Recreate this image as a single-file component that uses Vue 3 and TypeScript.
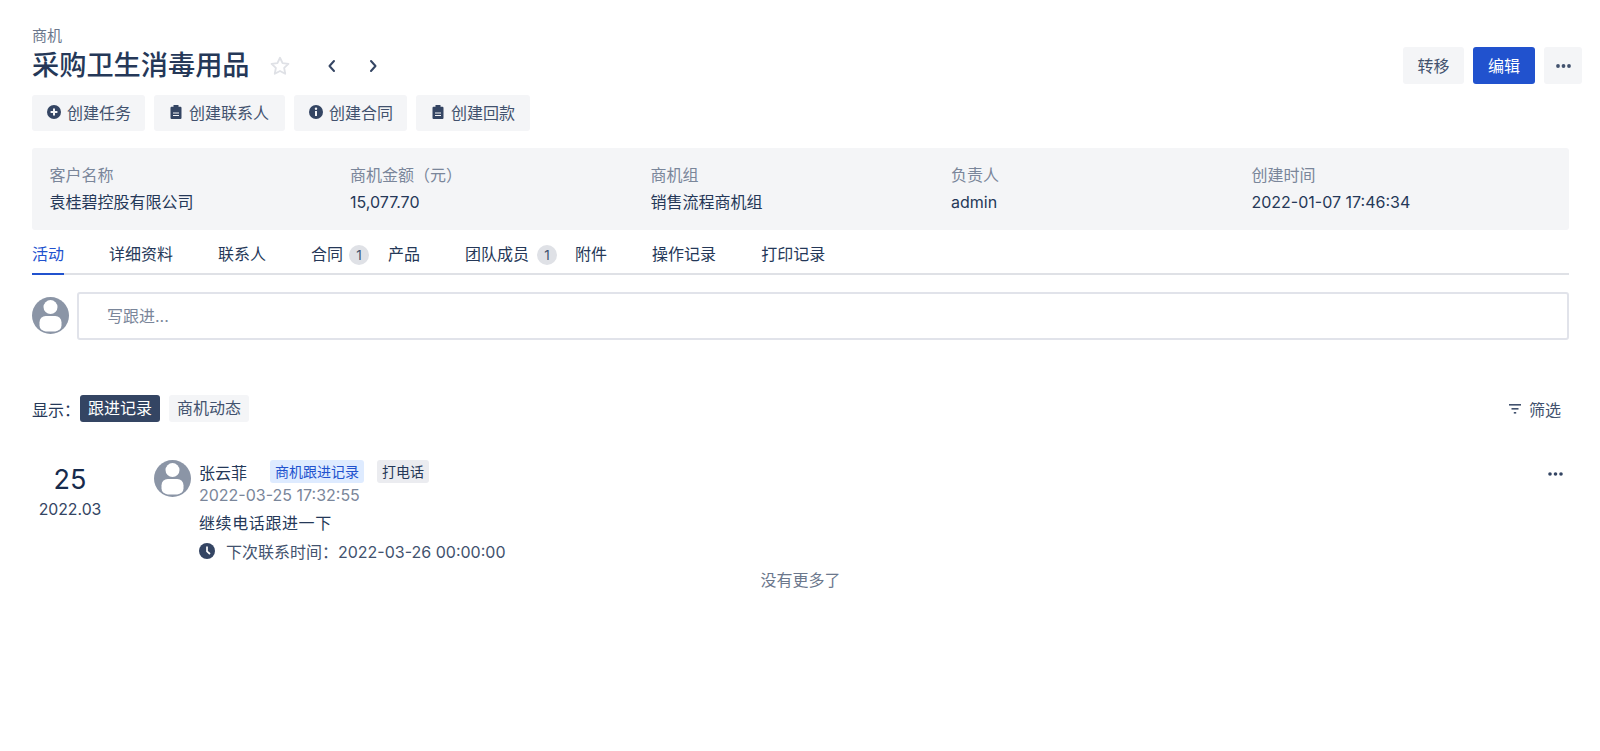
<script setup lang="ts">
interface Action { label: string; icon: string }
interface Field { label: string; value: string }
interface Tab { label: string; count?: number }

const actions: Action[] = [
  { label: "创建任务", icon: "plus" },
  { label: "创建联系人", icon: "clip" },
  { label: "创建合同", icon: "info" },
  { label: "创建回款", icon: "clip" },
];

const fields: Field[] = [
  { label: "客户名称", value: "袁桂碧控股有限公司" },
  { label: "商机金额（元）", value: "15,077.70" },
  { label: "商机组", value: "销售流程商机组" },
  { label: "负责人", value: "admin" },
  { label: "创建时间", value: "2022-01-07 17:46:34" },
];

const tabs: Tab[] = [
  { label: "活动" },
  { label: "详细资料" },
  { label: "联系人" },
  { label: "合同", count: 1 },
  { label: "产品" },
  { label: "团队成员", count: 1 },
  { label: "附件" },
  { label: "操作记录" },
  { label: "打印记录" },
];
</script>

<template>
  <div class="page">
    <div class="crumb">商机</div>
    <div class="head">
      <h1 class="title">采购卫生消毒用品</h1>
      <svg class="star" width="22" height="22" viewBox="0 0 24 24" fill="none" stroke="#dfe1e6" stroke-width="2" stroke-linejoin="round">
        <path d="M12 3l2.800 5.900 6.400.8-4.700 4.400 1.200 6.400L12 17.400l-5.700 3.100 1.200-6.400-4.700-4.400 6.400-.8z" />
      </svg>
      <svg class="chev" width="16" height="16" viewBox="0 0 16 16" fill="none" stroke="#344563" stroke-width="2" stroke-linecap="round" stroke-linejoin="round">
        <path d="M10 3L5.500 8l4.500 5" />
      </svg>
      <svg class="chev next" width="16" height="16" viewBox="0 0 16 16" fill="none" stroke="#344563" stroke-width="2" stroke-linecap="round" stroke-linejoin="round">
        <path d="M6 3l4.500 5L6 13" />
      </svg>
      <div class="head-btns">
        <button class="btn transfer">转移</button>
        <button class="btn primary">编辑</button>
        <button class="btn square">
          <svg width="15" height="4" viewBox="0 0 15 4" fill="#42526e"><circle cx="2" cy="2" r="1.900" /><circle cx="7.500" cy="2" r="1.900" /><circle cx="13" cy="2" r="1.900" /></svg>
        </button>
      </div>
    </div>

    <div class="actions">
      <button v-for="a in actions" :key="a.label" class="btn action">
        <svg v-if="a.icon === 'plus'" width="16" height="16" viewBox="0 0 16 16">
          <circle cx="8" cy="8" r="7" fill="#344563" />
          <path d="M8 4.600v6.800M4.600 8h6.800" stroke="#f4f5f7" stroke-width="2" />
        </svg>
        <svg v-else-if="a.icon === 'info'" width="16" height="16" viewBox="0 0 16 16">
          <circle cx="8" cy="8" r="7" fill="#344563" />
          <rect x="7" y="7" width="2" height="5" fill="#f4f5f7" />
          <circle cx="8" cy="4.800" r="1.200" fill="#f4f5f7" />
        </svg>
        <svg v-else width="16" height="16" viewBox="0 0 16 16">
          <path d="M3.500 2.800H5.500V1H10.500V2.800H12.500Q13.500 2.800 13.500 4V13.800Q13.500 15 12.500 15H3.500Q2.500 15 2.500 13.800V4Q2.500 2.800 3.500 2.800Z" fill="#344563" />
          <path d="M5 9h6M5 11.500h6" stroke="#f4f5f7" stroke-width="1.200" />
        </svg>
        <span>{{ a.label }}</span>
      </button>
    </div>

    <div class="panel">
      <div v-for="f in fields" :key="f.label" class="field">
        <div class="field-label">{{ f.label }}</div>
        <div class="field-value">{{ f.value }}</div>
      </div>
    </div>

    <div class="tabs">
      <div v-for="(t, i) in tabs" :key="t.label" class="tab" :class="{ active: i === 0, counted: t.count }">
        {{ t.label }}<span v-if="t.count" class="count">{{ t.count }}</span>
      </div>
    </div>

    <div class="composer">
      <svg class="avatar" width="37" height="37" viewBox="0 0 36 36">
        <circle cx="18" cy="18" r="18" fill="#8b95a6" />
        <circle cx="18" cy="9.800" r="6.800" fill="#fff" />
        <rect x="7.300" y="18.500" width="21.400" height="15" rx="6" fill="#fff" />
      </svg>
      <div class="input">写跟进...</div>
    </div>

    <div class="filter-row">
      <span class="show">显示：</span>
      <span class="chip on">跟进记录</span>
      <span class="chip">商机动态</span>
      <span class="filter">
        <svg width="12" height="10" viewBox="0 0 12 10" fill="#42526e"><rect y="0" width="12" height="1.600" /><rect x="2.500" y="4" width="7" height="1.600" /><rect x="4.800" y="8" width="2.400" height="1.600" /></svg>
        筛选
      </span>
    </div>

    <div class="entry">
      <div class="date">
        <div class="day">25</div>
        <div class="month">2022.03</div>
      </div>
      <svg class="avatar" width="37" height="37" viewBox="0 0 36 36">
        <circle cx="18" cy="18" r="18" fill="#8b95a6" />
        <circle cx="18" cy="9.800" r="6.800" fill="#fff" />
        <rect x="7.300" y="18.500" width="21.400" height="15" rx="6" fill="#fff" />
      </svg>
      <div class="entry-body">
        <div class="entry-top">
          <span class="name">张云菲</span>
          <span class="tag blue">商机跟进记录</span>
          <span class="tag">打电话</span>
        </div>
        <div class="time">2022-03-25 17:32:55</div>
        <div class="content">继续电话跟进一下</div>
        <div class="next-time">
          <svg width="16" height="16" viewBox="0 0 16 16">
            <circle cx="8" cy="8" r="8" fill="#344563" />
            <path d="M8 3.500V8.300L11 11" fill="none" stroke="#fff" stroke-width="1.700" />
          </svg>
          <span>下次联系时间：2022-03-26 00:00:00</span>
        </div>
      </div>
      <svg class="entry-more" width="15" height="4" viewBox="0 0 15 4" fill="#344563"><circle cx="2" cy="2" r="1.800" /><circle cx="7.500" cy="2" r="1.800" /><circle cx="13" cy="2" r="1.800" /></svg>
    </div>

    <div class="no-more">没有更多了</div>
  </div>
</template>

<style scoped>
.page {
  box-sizing: border-box;
  width: 1600px;
  height: 751px;
  padding: 26px 31px 0 32px;
  overflow: hidden;
  background: #fff;
  color: #172b4d;
  font-family: Inter, "Noto Sans CJK SC", sans-serif;
  font-size: 16px;
}

.crumb {
  line-height: 20px;
  font-size: 15px;
  color: #6b778c;
}

.head {
  display: flex;
  align-items: center;
  height: 37px;
  margin-top: 1px;
  margin-right: -13px;
}

.title {
  margin: 0;
  padding-top: 1px;
  font-size: 27.200px;
  font-weight: 500;
  line-height: 36px;
  color: #253858;
}

.star {
  margin-left: 19px;
}

.chev {
  margin-left: 33px;
}

.chev.next {
  margin-left: 25px;
}

.head-btns {
  display: flex;
  gap: 9px;
  margin-left: auto;
}

.btn {
  box-sizing: border-box;
  display: inline-flex;
  align-items: center;
  justify-content: center;
  height: 37px;
  padding: 0 14px 2px;
  border: 0;
  border-radius: 3px;
  background: #f4f5f7;
  color: #42526e;
  font: inherit;
  font-size: 16px;
  white-space: nowrap;
}

.btn.transfer {
  width: 61px;
}

.btn.primary {
  width: 62px;
  background: #2152ce;
  color: #fff;
}

.btn.square {
  width: 38px;
  padding: 0;
}

.actions {
  display: flex;
  gap: 9px;
  margin-top: 11px;
}

.btn.action {
  height: 36px;
  gap: 5px;
  padding: 0 14px 2px;
}

.btn.action:nth-child(2) {
  padding: 0 16px 2px 14px;
}

.btn.action:nth-child(4) {
  padding: 0 15px 2px 14px;
}

.panel {
  display: grid;
  grid-template-columns: repeat(5, 300.500px);
  margin-top: 17px;
  padding: 16px 18px 17px 17.500px;
  border-radius: 3px;
  background: #f4f5f7;
}

.field-label {
  line-height: 22px;
  color: #7a869a;
}

.field-value {
  margin-top: 5px;
  line-height: 22px;
  color: #253858;
}

.tabs {
  display: flex;
  gap: 45px;
  height: 43px;
  border-bottom: 2px solid #dfe1e6;
}

.tab {
  box-sizing: border-box;
  height: 45px;
  padding-top: 13px;
  line-height: 22px;
  color: #253858;
  white-space: nowrap;
}

.tab.active {
  color: #2152ce;
  border-bottom: 2px solid #2152ce;
}

.tab.counted {
  margin-right: -26px;
}

.tab.counted:nth-child(6) {
  margin-right: -27px;
}

.count {
  display: inline-block;
  width: 20px;
  height: 20px;
  margin-left: 6px;
  border-radius: 50%;
  background: #dfe1e6;
  color: #42526e;
  font-size: 13.500px;
  line-height: 20px;
  text-align: center;
}

.tab:nth-child(6) .count {
  margin-left: 8px;
}

.composer {
  display: flex;
  align-items: flex-start;
  gap: 8px;
  margin-top: 17px;
}

.composer .avatar {
  margin-top: 5px;
}

.avatar {
  flex: none;
}

.input {
  box-sizing: border-box;
  flex: 1;
  height: 48px;
  padding-left: 28px;
  border: 2px solid #e1e3ea;
  border-radius: 3px;
  color: #7a869a;
  line-height: 44px;
}

.filter-row {
  display: flex;
  align-items: center;
  height: 27px;
  margin-top: 55px;
  color: #253858;
}

.show {
  width: 48px;
  white-space: nowrap;
}

.chip {
  box-sizing: border-box;
  height: 27px;
  padding: 0 8px;
  margin-right: 9px;
  border-radius: 3px;
  background: #f4f5f7;
  color: #42526e;
  line-height: 27px;
}

.chip.on {
  background: #344563;
  color: #fff;
}

.filter {
  display: flex;
  align-items: center;
  gap: 8px;
  margin-left: auto;
  margin-right: 8px;
  color: #42526e;
}

.entry {
  display: flex;
  align-items: flex-start;
  margin-top: 38px;
}

.date {
  flex: none;
  width: 76px;
  margin-right: 46px;
  text-align: center;
}

.day {
  padding-top: 2px;
  font-size: 27px;
  line-height: 36px;
  color: #172b4d;
}

.month {
  margin-top: 1px;
  font-size: 15.800px;
  line-height: 22px;
  color: #344563;
}

.entry-body {
  margin-left: 8px;
}

.entry-top {
  display: flex;
  align-items: center;
  height: 23px;
}

.name {
  width: 71px;
  color: #253858;
}

.tag {
  box-sizing: border-box;
  height: 23px;
  padding: 0 5px;
  margin-right: 13px;
  border-radius: 3px;
  background: #ebecf0;
  color: #253858;
  font-size: 14px;
  line-height: 23px;
}

.tag.blue {
  background: #deebff;
  color: #2152ce;
}

.time {
  margin-top: 1px;
  line-height: 22px;
  color: #7a869a;
}

.content {
  margin-top: 6px;
  line-height: 22px;
  letter-spacing: 0.6px;
  color: #253858;
}

.next-time {
  display: flex;
  align-items: center;
  gap: 11px;
  height: 22px;
  margin-top: 6px;
  color: #42526e;
}

.entry-more {
  margin-left: auto;
  margin-right: 6px;
  margin-top: 12px;
}

.no-more {
  margin-top: 7px;
  line-height: 22px;
  text-align: center;
  color: #6b778c;
}
</style>

<style>
html,
body {
  margin: 0;
  background: #fff;
}
</style>
